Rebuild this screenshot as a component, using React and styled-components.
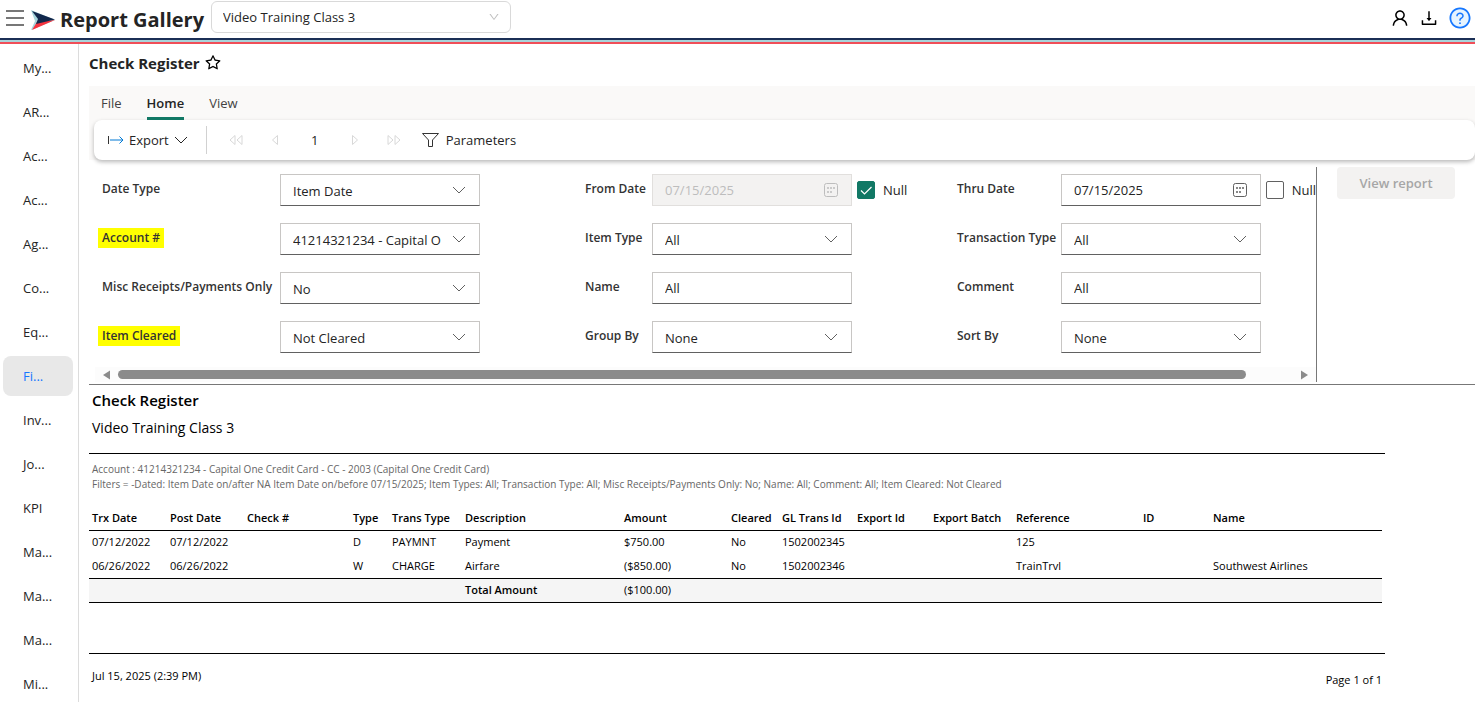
import React, { useState } from 'react';
import styled, { createGlobalStyle } from 'styled-components';
import {
  AiOutlineDown,
  AiOutlineDownload,
  AiOutlineQuestionCircle,
  AiOutlineStar,
  AiOutlineUser,
} from 'react-icons/ai';

const menuItems = [
  'My...', 'AR...', 'Ac...', 'Ac...', 'Ag...', 'Co...', 'Eq...', 'Fi...',
  'Inv...', 'Jo...', 'KPI', 'Ma...', 'Ma...', 'Ma...', 'Mi...',
];

const tabs = ['File', 'Home', 'View'];

// three parameters per row
const parameters = [
  { id: 'dateType', label: 'Date Type', type: 'select', value: 'Item Date' },
  { id: 'fromDate', label: 'From Date', type: 'date', value: '07/15/2025', isNull: true },
  { id: 'thruDate', label: 'Thru Date', type: 'date', value: '07/15/2025', isNull: false },
  { id: 'account', label: 'Account #', type: 'select', value: '41214321234 - Capital One Credit Card', marked: true },
  { id: 'itemType', label: 'Item Type', type: 'select', value: 'All' },
  { id: 'transType', label: 'Transaction Type', type: 'select', value: 'All' },
  { id: 'misc', label: 'Misc Receipts/Payments Only', type: 'select', value: 'No' },
  { id: 'name', label: 'Name', type: 'text', value: 'All' },
  { id: 'comment', label: 'Comment', type: 'text', value: 'All' },
  { id: 'cleared', label: 'Item Cleared', type: 'select', value: 'Not Cleared', marked: true },
  { id: 'groupBy', label: 'Group By', type: 'select', value: 'None' },
  { id: 'sortBy', label: 'Sort By', type: 'select', value: 'None' },
];

const columns = [
  { title: 'Trx Date', width: 78 },
  { title: 'Post Date', width: 77 },
  { title: 'Check #', width: 106 },
  { title: 'Type', width: 39 },
  { title: 'Trans Type', width: 73 },
  { title: 'Description', width: 159 },
  { title: 'Amount', width: 107 },
  { title: 'Cleared', width: 51 },
  { title: 'GL Trans Id', width: 75 },
  { title: 'Export Id', width: 76 },
  { title: 'Export Batch', width: 83 },
  { title: 'Reference', width: 127 },
  { title: 'ID', width: 70 },
  { title: 'Name', width: 172 },
];

const rows = [
  ['07/12/2022', '07/12/2022', '', 'D', 'PAYMNT', 'Payment', '$750.00', 'No', '1502002345', '', '', '125', '', ''],
  ['06/26/2022', '06/26/2022', '', 'W', 'CHARGE', 'Airfare', '($850.00)', 'No', '1502002346', '', '', 'TrainTrvl', '', 'Southwest Airlines'],
];

const Chevron = () => (
  <svg width="14" height="14" viewBox="0 0 14 14" fill="none" stroke="currentColor">
    <path d="M1 4l6 6 6-6" />
  </svg>
);

const CalendarIcon = () => (
  <svg width="14" height="14" viewBox="0 0 14 14" fill="none" stroke="currentColor">
    <rect x="0.5" y="0.5" width="13" height="13" rx="2" />
    <path d="M3 5h2M6 5h2M9 5h2M3 9h2M6 9h2" strokeWidth="1.600" />
  </svg>
);

const PageArrow = ({ double, back }) => (
  <svg width="14" height="12" viewBox="0 0 14 12" fill="none" stroke="currentColor">
    <g transform={back ? 'matrix(-1 0 0 1 14 0)' : undefined}>
      {double ? <path d="M1 1.5v9l5-4.5zM8 1.5v9l5-4.5z" /> : <path d="M4.500 1.500v9l5-4.500z" />}
    </g>
  </svg>
);

const Field = ({ item }) => {
  const [value, setValue] = useState(item.value);
  const [isNull, setIsNull] = useState(item.isNull);
  const onChange = (e) => setValue(e.target.value);

  return (
    <>
      <FieldLabel htmlFor={item.id}>
        {item.marked ? <Mark>{item.label}</Mark> : item.label}
      </FieldLabel>
      <FieldCell>
        <ControlWrap>
          {item.type === 'select' ? (
            <Select id={item.id} value={value} onChange={onChange}>
              <option>{item.value}</option>
            </Select>
          ) : (
            <Input id={item.id} value={value} onChange={onChange} disabled={isNull} />
          )}
          {item.type !== 'text' && (
            <ControlIcon $disabled={isNull}>
              {item.type === 'date' ? <CalendarIcon /> : <Chevron />}
            </ControlIcon>
          )}
        </ControlWrap>
        {item.type === 'date' && (
          <NullLabel>
            <Checkbox type="checkbox" checked={isNull} onChange={() => setIsNull(!isNull)} />
            {isNull && (
              <Tick width="18" height="18" viewBox="0 0 18 18" fill="none" stroke="#fff">
                <path d="M4 9.500l3.500 3.500L14.500 6" strokeWidth="1.200" />
              </Tick>
            )}
            Null
          </NullLabel>
        )}
      </FieldCell>
    </>
  );
};

const App = () => {
  const [activeTab, setActiveTab] = useState('Home');

  return (
    <Page>
      <GlobalStyle />
      <Header>
        <IconButton aria-label="Menu">
          <svg width="18" height="18" viewBox="0 0 18 18" stroke="#777" strokeWidth="2">
            <path d="M0 2h18M0 9h18M0 16h18" />
          </svg>
        </IconButton>
        <Logo width="24" height="20" viewBox="0 0 24 20">
          <path d="M0 0L24 10 0 20l4-9z" fill="#a6d5dc" />
          <path d="M1 20L24 10 6 12z" fill="#f5333f" />
          <path d="M1 1L24 9.500 5 14l2-5z" fill="#12284c" />
        </Logo>
        <Brand>Report Gallery</Brand>
        <CompanyWrap>
          <CompanySelect aria-label="Company" defaultValue="Video Training Class 3">
            <option>Video Training Class 3</option>
          </CompanySelect>
          <CompanyIcon><AiOutlineDown size={12} /></CompanyIcon>
        </CompanyWrap>
        <HeaderActions>
          <IconButton aria-label="Account"><AiOutlineUser size={20} /></IconButton>
          <IconButton aria-label="Download"><AiOutlineDownload size={20} /></IconButton>
          <HelpButton aria-label="Help"><AiOutlineQuestionCircle size={24} /></HelpButton>
        </HeaderActions>
      </Header>
      <Body>
        <Sidebar>
          {menuItems.map((item, i) => (
            <MenuLink key={i} href="#" $active={i === 7}>{item}</MenuLink>
          ))}
        </Sidebar>
        <Main>
          <TitleRow>
            <Title>Check Register</Title>
            <IconButton aria-label="Favorite"><AiOutlineStar size={18} /></IconButton>
          </TitleRow>
          <Ribbon>
            <TabList>
              {tabs.map((tab) => (
                <Tab key={tab} $active={tab === activeTab} onClick={() => setActiveTab(tab)}>{tab}</Tab>
              ))}
            </TabList>
            <Toolbar>
              <ExportButton>
                <svg width="16" height="12" viewBox="0 0 16 12" fill="none">
                  <path d="M0.500 2v8" stroke="#333" />
                  <path d="M2 6h13M11.500 2.500L15 6l-3.500 3.500" stroke="#0078d4" />
                </svg>
                Export
                <Chevron />
              </ExportButton>
              <Pager>
                <PagerButton disabled aria-label="First page"><PageArrow double back /></PagerButton>
                <PagerButton disabled aria-label="Previous page"><PageArrow back /></PagerButton>
                <PageInput aria-label="Page" defaultValue="1" />
                <PagerButton disabled aria-label="Next page"><PageArrow /></PagerButton>
                <PagerButton disabled aria-label="Last page"><PageArrow double /></PagerButton>
              </Pager>
              <ParametersButton>
                <svg width="17" height="16" viewBox="0 0 17 16" fill="none" stroke="#333">
                  <path d="M0.500 1.500h16L10.500 8v6.500h-4V8z" />
                </svg>
                Parameters
              </ParametersButton>
            </Toolbar>
          </Ribbon>
          <ParameterPanel>
            <ParameterArea>
              <ParameterGrid>
                {parameters.map((item) => <Field key={item.id} item={item} />)}
              </ParameterGrid>
              <ScrollTrack>
                <svg width="8" height="10" viewBox="0 0 8 10" fill="#8b8b8b"><path d="M0 5l7-4.500v9z" /></svg>
                <ScrollRail><ScrollThumb /></ScrollRail>
                <svg width="8" height="10" viewBox="0 0 8 10" fill="#8b8b8b"><path d="M8 5L1 0.500v9z" /></svg>
              </ScrollTrack>
            </ParameterArea>
            <SubmitArea>
              <ViewButton disabled>View report</ViewButton>
            </SubmitArea>
          </ParameterPanel>
          <Report>
            <ReportHead>
              <ReportTitle>Check Register</ReportTitle>
              <ReportCompany>Video Training Class 3</ReportCompany>
            </ReportHead>
            <ReportNotes>
              <div>Account : 41214321234 - Capital One Credit Card - CC - 2003 (Capital One Credit Card)</div>
              <div>Filters = -Dated: Item Date on/after NA Item Date on/before 07/15/2025; Item Types: All; Transaction Type: All; Misc Receipts/Payments Only: No; Name: All; Comment: All; Item Cleared: Not Cleared</div>
            </ReportNotes>
            <Table>
              <colgroup>
                {columns.map((col) => <col key={col.title} width={col.width} />)}
              </colgroup>
              <thead>
                <tr>{columns.map((col) => <th key={col.title}>{col.title}</th>)}</tr>
              </thead>
              <tbody>
                {rows.map((row, i) => (
                  <tr key={i}>{row.map((cell, j) => <td key={j}>{cell}</td>)}</tr>
                ))}
              </tbody>
              <tfoot>
                <tr>
                  <td colSpan={5} />
                  <th scope="row">Total Amount</th>
                  <td>($100.00)</td>
                  <td colSpan={7} />
                </tr>
              </tfoot>
            </Table>
            <ReportFooter>
              <div>Jul 15, 2025 (2:39 PM)</div>
              <PageCount>Page 1 of 1</PageCount>
            </ReportFooter>
          </Report>
        </Main>
      </Body>
    </Page>
  );
};

const GlobalStyle = createGlobalStyle`
  * {
    box-sizing: border-box;
  }

  body {
    margin: 0;
    overflow: hidden;
    background: #fff;
    color: #242424;
    font-family: 'Segoe UI', 'Open Sans', sans-serif;
    font-size: 13px;
  }

  button, input, select {
    font: inherit;
    color: inherit;
  }

  svg {
    display: block;
    flex-shrink: 0;
  }
`;

const Page = styled.div`
  display: flex;
  flex-direction: column;
  height: 100vh;
`;

const Header = styled.header`
  display: flex;
  align-items: center;
  height: 40px;
  flex-shrink: 0;
  padding: 0 3px 2px 6px;
  border-bottom: 2px solid #1b2f56;
`;

const IconButton = styled.button`
  display: flex;
  padding: 0;
  border: 0;
  background: none;
  color: #000;
`;

const HelpButton = styled(IconButton)`
  border-radius: 50%;
  background: radial-gradient(circle, #e6f4ff 10px, transparent 11px);
  color: #1677ff;
`;

const Logo = styled.svg`
  margin: 4px 5px 0 7px;
`;

const Brand = styled.h1`
  margin: 4px 7px 0 0;
  font-size: 20px;
  line-height: 28px;
  font-weight: 700;
`;

const CompanyWrap = styled.div`
  position: relative;
  align-self: flex-start;
  width: 300px;
  padding-top: 1px;
`;

const CompanySelect = styled.select`
  width: 100%;
  height: 32px;
  padding: 0 30px 0 11px;
  border: 1px solid #d9d9d9;
  border-radius: 6px;
  background: #fff;
  appearance: none;
`;

const CompanyIcon = styled.span`
  position: absolute;
  top: 11px;
  right: 11px;
  color: #bfbfbf;
  pointer-events: none;
`;

const HeaderActions = styled.div`
  display: flex;
  align-items: center;
  gap: 9px;
  margin-left: auto;
`;

const Body = styled.div`
  display: flex;
  flex: 1;
  min-height: 0;
  border-top: 2px solid #f04e58;
  box-shadow: 0 -2px #a9d4da;
  margin-top: 2px;
`;

const Sidebar = styled.nav`
  display: flex;
  flex-direction: column;
  gap: 4px;
  width: 79px;
  flex-shrink: 0;
  padding: 4px 5px 0 3px;
  border-right: 1px solid #dcdcdc;
  overflow: hidden;
`;

const MenuLink = styled.a`
  height: 40px;
  flex-shrink: 0;
  padding-left: 20px;
  border-radius: 8px;
  background: ${({ $active }) => ($active ? '#e8e8e8' : 'none')};
  color: ${({ $active }) => ($active ? '#1677ff' : '#242424')};
  line-height: 40px;
  text-decoration: none;
`;

const Main = styled.main`
  flex: 1;
  min-width: 0;
  padding-left: 10px;
`;

const TitleRow = styled.div`
  display: flex;
  align-items: center;
  gap: 4px;
  height: 42px;
  padding-bottom: 4px;
`;

const Title = styled.h2`
  margin: 0;
  font-size: 15px;
  font-weight: 700;
`;

const Ribbon = styled.div`
  padding-left: 5px;
  background: #faf9f8;
`;

const TabList = styled.div`
  display: flex;
  gap: 25px;
  height: 34px;
  padding-left: 7px;
`;

const Tab = styled.button`
  padding: 2px 0 0;
  border: 0;
  border-bottom: 3px solid ${({ $active }) => ($active ? '#117865' : 'transparent')};
  background: none;
  color: ${({ $active }) => ($active ? '#242424' : '#424242')};
  font-weight: ${({ $active }) => ($active ? 600 : 400)};
`;

const Toolbar = styled.div`
  display: flex;
  align-items: center;
  height: 40px;
  padding-left: 14px;
  border-radius: 8px;
  background: #fff;
  box-shadow: 0 2px 4px rgba(0, 0, 0, 0.28);
`;

const ToolButton = styled.button`
  display: flex;
  align-items: center;
  padding: 0;
  border: 0;
  background: none;
`;

const ExportButton = styled(ToolButton)`
  gap: 5px;
  height: 28px;
  padding-right: 18px;
  border-right: 1px solid #d1d1d1;
`;

const Pager = styled.div`
  display: flex;
  align-items: center;
  gap: 25px;
  padding: 0 21px 0 22px;
`;

const PagerButton = styled(ToolButton)`
  color: #d8d8d8;
`;

const PageInput = styled.input`
  width: 16px;
  padding: 0;
  border: 0;
  text-align: center;
`;

const ParametersButton = styled(ToolButton)`
  gap: 7px;
`;

const ParameterPanel = styled.div`
  display: flex;
  margin-top: 7px;
  padding-bottom: 2px;
  border-bottom: 1px solid #777;
`;

const ParameterArea = styled.div`
  flex: 1;
  min-width: 0;
  border-right: 1px solid #777;
  overflow: hidden;
`;

const ParameterGrid = styled.div`
  display: grid;
  grid-template-columns: 178px 305px 67px 305px 104px 255px;
  row-gap: 17px;
  padding: 7px 0 14px 13px;
`;

const FieldLabel = styled.label`
  padding-top: 5px;
  color: #333;
  font-size: 12px;
  line-height: 20px;
  font-weight: 600;
  white-space: nowrap;
`;

const Mark = styled.mark`
  display: inline-block;
  margin-left: -4px;
  padding: 0 4px;
  background: #ff0;
  color: inherit;
`;

const FieldCell = styled.div`
  display: flex;
  align-items: center;
  gap: 5px;
`;

const ControlWrap = styled.div`
  position: relative;
  width: 200px;
`;

const Input = styled.input`
  display: block;
  width: 100%;
  height: 32px;
  padding: 0 38px 0 12px;
  border: 1px solid #c8c6c4;
  border-bottom-color: #616161;
  border-radius: 0;
  background: #fff;

  &:disabled {
    border-color: #e1dfdd;
    background: #f3f2f1;
    color: #bdbdbd;
  }
`;

const Select = styled(Input).attrs({ as: 'select' })`
  appearance: none;
  padding-top: 2px;
`;

const ControlIcon = styled.span`
  position: absolute;
  top: 9px;
  right: 14px;
  color: ${({ $disabled }) => ($disabled ? '#bdbdbd' : '#616161')};
  pointer-events: none;
`;

const NullLabel = styled.label`
  position: relative;
  display: flex;
  align-items: center;
  gap: 8px;
`;

const Checkbox = styled.input`
  width: 18px;
  height: 18px;
  margin: 0;
  border: 1px solid #616161;
  border-radius: 2px;
  background: #fff;
  appearance: none;

  &:checked {
    border-color: #117865;
    background: #117865;
  }
`;

const Tick = styled.svg`
  position: absolute;
  left: 0;
  pointer-events: none;
`;

const ScrollTrack = styled.div`
  display: flex;
  align-items: center;
  gap: 7px;
  height: 15px;
  margin-left: 6px;
  padding: 0 8px;
  background: #fcfcfc;
`;

const ScrollRail = styled.div`
  flex: 1;
`;

const ScrollThumb = styled.div`
  width: 96%;
  height: 9px;
  border-radius: 5px;
  background: #8b8b8b;
`;

const SubmitArea = styled.div`
  padding: 0 20px;
`;

const ViewButton = styled.button`
  width: 118px;
  height: 32px;
  border: 0;
  border-radius: 4px;
  background: #f3f2f1;
  color: #a6a6a6;
  font-weight: 600;
`;

const Report = styled.section`
  max-width: 1296px;
  color: #000;
  font-size: 11px;
`;

const ReportHead = styled.div`
  height: 69px;
  padding: 3px 3px 0;
  border-bottom: 1px solid #000;
`;

const ReportTitle = styled.h3`
  margin: 0 0 4px;
  font-size: 15px;
  line-height: 24px;
  font-weight: 600;
`;

const ReportCompany = styled.div`
  font-size: 14px;
  line-height: 24px;
`;

const ReportNotes = styled.div`
  padding: 8px 3px 14px;
  color: #666;
  font-size: 10px;
  line-height: 15px;
  white-space: nowrap;
`;

const Table = styled.table`
  width: calc(100% - 3px);
  table-layout: fixed;
  border-collapse: collapse;

  th, td {
    height: 24px;
    padding: 0 3px 1px;
    text-align: left;
    white-space: nowrap;
  }

  th {
    font-weight: 600;
  }

  thead tr {
    border-bottom: 1px solid #000;
  }

  tfoot tr {
    border-top: 1px solid #000;
    border-bottom: 1px solid #000;
    background: #f5f5f5;
  }
`;

const ReportFooter = styled.footer`
  display: flex;
  justify-content: space-between;
  margin-top: 50px;
  padding: 14px 3px;
  border-top: 1px solid #000;
  line-height: 15px;
`;

const PageCount = styled.div`
  padding-top: 4px;
`;

export default App;
